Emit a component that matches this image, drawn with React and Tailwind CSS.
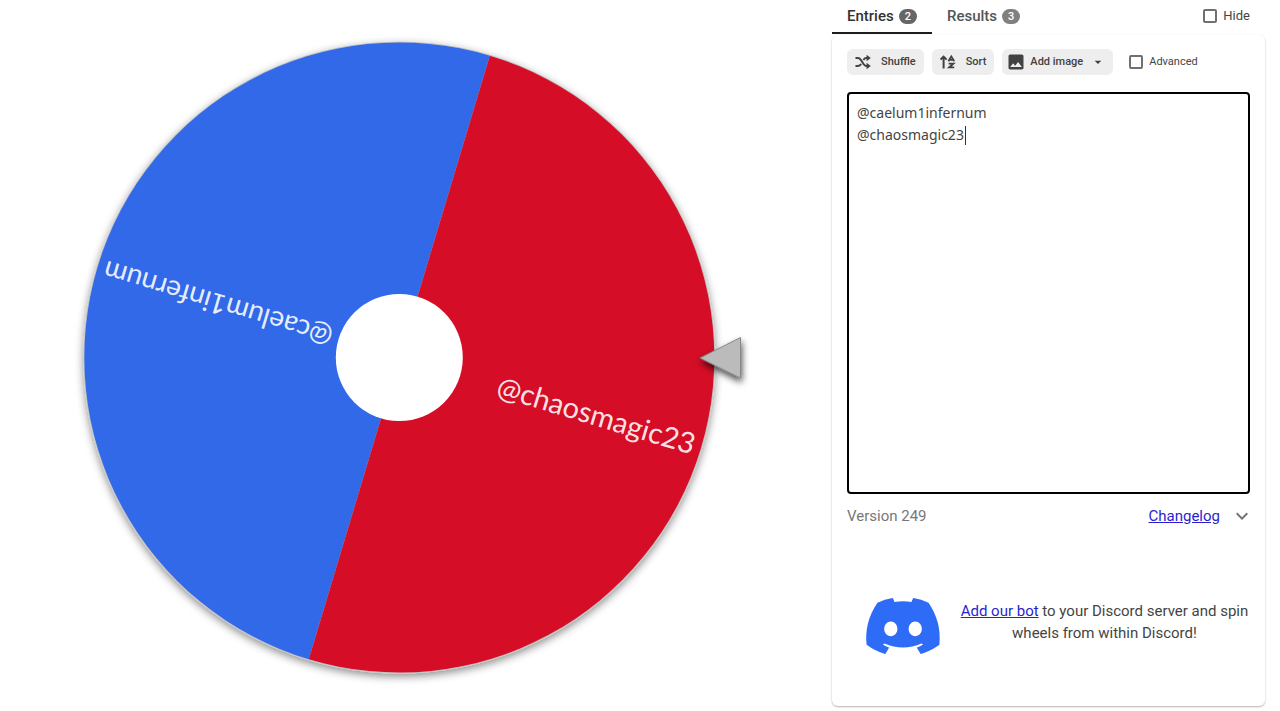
import { MdImage, MdArrowDropDown, MdExpandMore } from "react-icons/md";
import { FaDiscord } from "react-icons/fa";

function Wheel() {
  return (
    <svg viewBox="0 0 800 711" className="block w-full" role="img" aria-label="Wheel">
      <defs>
        <filter id="wheelShadow" x="-10%" y="-10%" width="120%" height="120%">
          <feDropShadow dx="0" dy="3" stdDeviation="4" floodColor="#000" floodOpacity="0.45" />
        </filter>
        <filter id="pointerShadow" x="-40%" y="-40%" width="180%" height="180%">
          <feDropShadow dx="1" dy="4" stdDeviation="3.5" floodColor="#000" floodOpacity="0.7" />
        </filter>
      </defs>
      <g filter="url(#wheelShadow)">
        <circle cx="399.3" cy="357.5" r="316" fill="#c4c4c4" />
        <g transform="translate(399.3 357.5) rotate(16.7)">
          <path d="M0 -315 A315 315 0 0 0 0 315 Z" fill="#3369e8" />
          <path d="M0 -315 A315 315 0 0 1 0 315 Z" fill="#d50f25" />
        </g>
      </g>
      <circle cx="399.3" cy="357.5" r="63.5" fill="#fff" />
      <g className="font-[Lato,sans-serif]" fill="#fff" fillOpacity="0.9" textAnchor="end">
        <text className="text-[29px]" transform="translate(399.3 357.5) rotate(16.7)" x="308" y="9">@chaosmagic23</text>
        <text className="text-[28px]" transform="translate(399.3 357.5) rotate(196.7)" x="308" y="9">@caelum1infernum</text>
      </g>
      <path d="M700 358 L740.5 337.5 V378 Z" fill="#bbb" stroke="#888" strokeWidth="1" strokeLinejoin="round" filter="url(#pointerShadow)" />
    </svg>
  );
}

function ShuffleIcon() {
  return (
    <svg viewBox="0 0 16 16" className="size-4" fill="none" stroke="currentColor" strokeWidth="1.9" aria-hidden="true">
      <path d="M0.5 4 H3 C7 4 7.5 12 11.5 12 H13" />
      <path d="M0.5 12 H3 C4.6 12 5.5 11.2 6.2 10.1 M8.4 5.9 C9.1 4.8 10 4 11.5 4 H13" />
      <path d="M11.6 0.8 L15.8 4 L11.6 7.2 Z M11.6 8.8 L15.8 12 L11.6 15.2 Z" fill="currentColor" stroke="none" />
    </svg>
  );
}

function SortIcon() {
  return (
    <svg viewBox="0 0 16 16" className="size-4" fill="none" stroke="currentColor" strokeWidth="2" aria-hidden="true">
      <path d="M3.6 14.5 V3 M0.6 5.6 L3.6 2.6 L6.6 5.6" />
      <path d="M8.4 7.2 L11.3 2.4 L14.2 7.2 M9.8 5.8 H12.8" strokeWidth="1.8" />
      <path d="M8.6 9.6 H13.4 L9.2 13.4 H14.2" strokeWidth="1.9" />
    </svg>
  );
}

const button = "flex h-[26px] items-center rounded-md bg-[#eee] text-[11px] font-medium text-[#424242]";
const checkbox = "size-3.5 appearance-none rounded-[2px] border-2 border-[#707070] bg-white checked:bg-[#707070]";
const badge = "rounded-full px-1.5 text-[11px] leading-[15px] font-medium text-white";
const link = "text-[#2a1fd0] underline";

export default function App() {
  return (
    <div className="flex items-start bg-white pr-[15px] font-[Roboto,sans-serif] text-[15px] text-[#444]">
      <main className="min-w-0 flex-1 pr-8">
        <Wheel />
      </main>
      <aside className="w-[433px] shrink-0">
        <div className="flex items-start leading-8 font-medium">
          <button type="button" className="flex items-center gap-[5px] border-b-2 border-[#1d1d1d] px-[15px] text-[#333]">
            Entries <span className={`${badge} bg-[#666]`}>2</span>
          </button>
          <button type="button" className="flex items-center gap-[5px] px-[15px] text-[#555]">
            Results <span className={`${badge} bg-[#808080]`}>3</span>
          </button>
          <label className="mr-[15px] ml-auto flex items-center gap-1.5 text-[13px] leading-8 font-normal">
            <input type="checkbox" className={checkbox} />
            Hide
          </label>
        </div>
        <section className="mt-px rounded-md px-[15px] pt-3.5 pb-10 shadow-[0_1px_2px_rgba(0,0,0,0.3)]">
          <div className="flex items-center gap-2">
            <button type="button" className={`${button} gap-2.5 px-2`}>
              <ShuffleIcon /> Shuffle
            </button>
            <button type="button" className={`${button} gap-2.5 px-2`}>
              <SortIcon /> Sort
            </button>
            <button type="button" className={`${button} gap-1 px-1`}>
              <MdImage className="size-5" /> Add image <MdArrowDropDown className="mx-[3px] size-4" />
            </button>
            <label className="ml-2 flex items-center gap-1.5 text-[11px]">
              <input type="checkbox" className={checkbox} />
              Advanced
            </label>
          </div>
          <div className="relative mt-[17px]">
            <textarea
              aria-label="Entries"
              spellCheck="false"
              className="block h-[402px] w-full resize-none rounded border-2 border-black bg-white p-2 font-['Noto_Sans',sans-serif] text-sm leading-[22px] outline-none"
              defaultValue={"@caelum1infernum\n@chaosmagic23"}
            />
            <span className="absolute top-[34px] left-[118px] h-[19px] w-px bg-[#333]" />
          </div>
          <div className="mt-2.5 flex items-center leading-[22px]">
            <span className="text-[#777]">Version 249</span>
            <a href="#changelog" className={`${link} ml-auto`}>Changelog</a>
            <button type="button" aria-label="Expand" className="ml-2.5 -mr-1 text-[#757575]">
              <MdExpandMore className="size-6" />
            </button>
          </div>
          <div className="mt-[58px] flex items-start">
            <FaDiscord className="ml-4 size-20 shrink-0 text-[#2e6bf6]" aria-hidden="true" />
            <p className="flex-1 pt-3.5 pl-4 text-center leading-[22px]">
              <a href="#bot" className={link}>Add our bot</a> to your Discord server and spin wheels from within Discord!
            </p>
          </div>
        </section>
      </aside>
    </div>
  );
}
